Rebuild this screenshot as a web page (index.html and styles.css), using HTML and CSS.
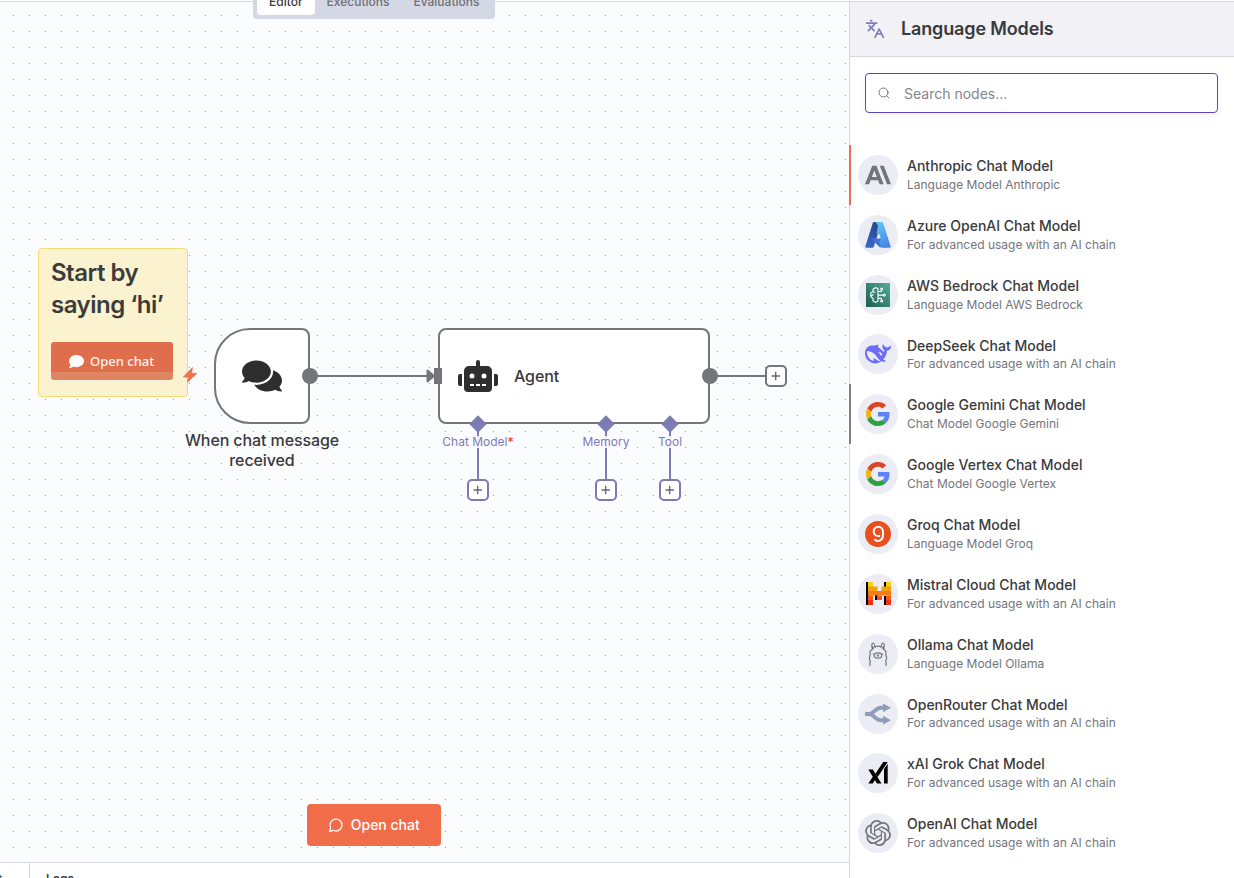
FILE: index.html
```html
<!DOCTYPE html>
<html lang="en">
<head>
<meta charset="utf-8">
<title>Workflow editor</title>
<link rel="stylesheet" href="styles.css">
</head>
<body>
<div class="topline"></div>
<div class="app">
  <main class="workspace">
    <section class="canvas">
      <nav class="tabs">
        <span class="tab active">Editor</span>
        <span class="tab">Executions</span>
        <span class="tab">Evaluations</span>
      </nav>

      <div class="sticky">
        <h2>Start by<br>saying ‘hi’</h2>
        <div class="sticky-button">
          <svg width="15" height="15" viewBox="0 0 512 512"><path fill="#fff" d="M256 32C114.600 32 0 125.100 0 240c0 49.600 21.400 95 57 130.700C44.500 421.100 2.700 466 2.200 466.500c-2.200 2.300-2.800 5.700-1.500 8.700S4.800 480 8 480c66.300 0 116-31.800 140.600-51.400 32.700 12.300 69 19.400 107.400 19.400 141.400 0 256-93.100 256-208S397.400 32 256 32z"/></svg>
          <span>Open chat</span>
        </div>
      </div>

      <svg class="wires" width="849" height="860" viewBox="0 2 849 860">
        <g stroke="#75757c" stroke-width="2"><path d="M310 376H430M710 376H765"/></g>
        <g stroke="#7d7bb3" stroke-width="2"><path d="M478 424V480M606 424V480M670 424V480"/></g>
        <path d="M427.500 370.500V381.500L434 376Z" fill="#75757c" stroke="#75757c" stroke-width="2" stroke-linejoin="round"/>
        <path d="M192.400 367.600 183.400 377H188.500L187.500 382.300 197 373.300H191.500Z" fill="#f4714e" stroke="#f4714e" stroke-width=".8" stroke-linejoin="round"/>
      </svg>

      <div class="node trigger">
        <svg width="40" height="36" viewBox="0 0 576 512"><path fill="#2e2e2e" d="M416 192c0-88.400-93.100-160-208-160S0 103.600 0 192c0 34.300 14.100 65.900 38 92-13.400 30.200-35.500 54.200-35.800 54.500-2.200 2.300-2.800 5.700-1.500 8.700S4.800 352 8 352c36.600 0 66.900-12.300 88.700-25 32.200 15.700 70.300 25 111.300 25 114.900 0 208-71.600 208-160zm122 220c23.900-26 38-57.700 38-92 0-66.900-53.500-124.200-129.300-148.100.9 6.600 1.300 13.300 1.300 20.100 0 105.900-107.700 192-240 192-10.800 0-21.300-.8-31.700-1.900C207.800 439.600 281.800 480 368 480c41 0 79.100-9.200 111.300-25 21.800 12.700 52.100 25 88.700 25 3.200 0 6.100-1.900 7.300-4.800 1.300-2.900.7-6.300-1.500-8.700-.3-.3-22.400-24.200-35.800-54.500z"/></svg>
      </div>
      <div class="node-caption">When chat message<br>received</div>

      <div class="node agent">
        <svg width="40" height="32" viewBox="0 0 640 512"><path fill="#2e2e2e" d="M32,224H64V416H32A32,32,0,0,1,0,384V256A32,32,0,0,1,32,224Zm512-48V448a64,64,0,0,1-64,64H160a64,64,0,0,1-64-64V176a80,80,0,0,1,80-80H288V32a32,32,0,0,1,64,0V96H464A80,80,0,0,1,544,176ZM264,256a40,40,0,1,0-40,40A40,40,0,0,0,264,256Zm-8,128H192v32h64Zm96,0H288v32h64ZM456,256a40,40,0,1,0-40,40A40,40,0,0,0,456,256Zm-8,128H384v32h64ZM640,256V384a32,32,0,0,1-32,32H576V224h32A32,32,0,0,1,640,256Z"/></svg>
        <span>Agent</span>
      </div>

      <svg class="wires" width="849" height="860" viewBox="0 2 849 860">
        <g fill="#75757c"><circle cx="310" cy="376" r="8"/><circle cx="710" cy="376" r="8"/><path d="M434 368h8v16h-8z"/></g>
        <path fill="#7d7bb3" d="M478 415.300l8.700 8.700-8.700 8.700-8.700-8.700zM606 415.300l8.700 8.700-8.700 8.700-8.700-8.700zM670 415.300l8.700 8.700-8.700 8.700-8.700-8.700z"/>
        <g fill="#fff" stroke-width="2">
          <rect x="766" y="366" width="20" height="20" rx="4" stroke="#75757c"/>
          <rect x="468" y="480" width="20" height="20" rx="4" stroke="#7d7bb3"/>
          <rect x="596" y="480" width="20" height="20" rx="4" stroke="#7d7bb3"/>
          <rect x="660" y="480" width="20" height="20" rx="4" stroke="#7d7bb3"/>
        </g>
        <path stroke="#66666c" stroke-width="1.300" d="M771.500 376h8.500M775.700 371.700v8.600M473.500 490h8.500M477.700 485.700v8.600M601.500 490h8.500M605.700 485.700v8.600M665.500 490h8.500M669.700 485.700v8.600"/>
      </svg>
      <span class="port chat">Chat Model<b>*</b></span>
      <span class="port memory">Memory</span>
      <span class="port tool">Tool</span>

      <div class="open-chat">
        <svg width="16" height="16" viewBox="0 0 24 24" fill="none" stroke="#fff" stroke-width="1.800" stroke-linecap="round" stroke-linejoin="round"><path d="M7.900 20A9 9 0 1 0 4 16.100L2 22Z"/></svg>
        <span>Open chat</span>
      </div>
    </section>
    <footer class="logs">
      <div class="logs-chat">Chat</div>
      <div class="logs-title">Logs</div>
    </footer>
  </main>

  <aside class="panel">
    <header class="panel-head">
      <svg width="20" height="20" viewBox="0 0 24 24" fill="none" stroke="#7d7bb8" stroke-width="2" stroke-linecap="round" stroke-linejoin="round"><path d="m5 8 6 6M4 14l6-6 2-3M2 5h12M7 2h1M22 22l-5-10-5 10M14 18h6"/></svg>
      <h1>Language Models</h1>
    </header>
    <div class="search">
      <svg width="12" height="12" viewBox="0 0 24 24" fill="none" stroke="#77777f" stroke-width="2" stroke-linecap="round"><circle cx="11" cy="11" r="9"/><path d="m22 22-4-4"/></svg>
      <span>Search nodes...</span>
    </div>
    <ul class="models">
      <li class="selected">
        <i><svg width="26" height="26" viewBox="0 0 24 24"><path fill="#75737b" d="M17.304 3.541h-3.672l6.696 16.918H24ZM6.696 3.541 0 20.459h3.744l1.370-3.553h7.005l1.369 3.553h3.744L10.536 3.541Zm-.371 10.223 2.291-5.945 2.292 5.945Z"/></svg></i>
        <div><strong>Anthropic Chat Model</strong><p>Language Model Anthropic</p></div>
      </li>
      <li>
        <i><svg width="26" height="26" viewBox="0 0 96 96"><defs><linearGradient id="az1" x1=".6" y1="0" x2=".3" y2="1"><stop offset="0" stop-color="#294586"/><stop offset="1" stop-color="#3767c8"/></linearGradient><linearGradient id="az2" x1=".3" y1="0" x2=".7" y2="1"><stop offset="0" stop-color="#5dc5f8"/><stop offset="1" stop-color="#4583e4"/></linearGradient></defs><path fill="url(#az1)" d="M33.300 0h28.500L32.300 91.600a4.500 4.500 0 0 1-4.300 3.100H5.900a4.500 4.500 0 0 1-4.300-6L29 3.100A4.500 4.500 0 0 1 33.300 0Z"/><path fill="#3f6edb" d="M71.200 61.300h-45a2.100 2.100 0 0 0-1.400 3.600l28.900 27a4.500 4.500 0 0 0 3.100 1.200h25.500Z"/><path fill="url(#az2)" d="M66.600 3.100A4.500 4.500 0 0 0 62.300 0H38.500L48 12 43 43 54 46 58 64 52 75 62 94.700H90a4.500 4.500 0 0 0 4.300-6Z"/></svg></i>
        <div><strong>Azure OpenAI Chat Model</strong><p>For advanced usage with an AI chain</p></div>
      </li>
      <li>
        <i><svg width="24" height="24" viewBox="0 0 24 24" fill="none"><defs><linearGradient id="aws" x1="0" y1="1" x2="1" y2="0"><stop stop-color="#1b5d50"/><stop offset="1" stop-color="#54ae94"/></linearGradient></defs><path fill="url(#aws)" d="M0 0h24v24H0z"/><g stroke="#fff" stroke-width="1.100"><path d="M12 5.500 9.500 4.700 7 6.200v2.300L4.800 10v3.700L7 15.200v2.600l2.700 1.600L12 18V5.500M12 8.500h3.500V7M12 12.100h5M12 15.400h3.500v1.600M7 8.500l2.200 1M4.800 13l2.800-1.600"/><circle cx="15.700" cy="6" r="1"/><circle cx="18.200" cy="12.100" r="1"/><circle cx="15.700" cy="18" r="1"/></g></svg></i>
        <div><strong>AWS Bedrock Chat Model</strong><p>Language Model AWS Bedrock</p></div>
      </li>
      <li>
        <i><svg width="26" height="26" viewBox="0 0 24 24"><path fill="#6c6cf8" d="M23.748 4.482c-.254-.124-.364.113-.512.234-.051.039-.094.09-.137.136-.372.397-.806.657-1.373.626-.829-.046-1.537.214-2.163.848-.133-.782-.575-1.248-1.247-1.548-.352-.156-.708-.311-.955-.65-.172-.241-.219-.51-.305-.774-.055-.16-.11-.323-.293-.35-.2-.031-.278.136-.356.276-.313.572-.434 1.202-.422 1.840.027 1.436.633 2.580 1.838 3.393.137.093.172.187.129.323-.082.280-.18.552-.266.833-.055.179-.137.217-.329.140a5.526 5.526 0 01-1.736-1.180c-.857-.828-1.631-1.742-2.597-2.458a11.365 11.365 0 00-.689-.471c-.985-.957.13-1.743.388-1.836.27-.098.093-.432-.779-.428-.872.004-1.670.295-2.687.684a3.055 3.055 0 01-.465.137 9.597 9.597 0 00-2.883-.102c-1.885.210-3.390 1.102-4.497 2.623C.082 8.606-.231 10.684.152 12.850c.403 2.284 1.569 4.175 3.360 5.653 1.858 1.533 3.997 2.284 6.438 2.140 1.482-.085 3.133-.284 4.994-1.860.47.234.962.327 1.780.397.63.059 1.236-.03 1.705-.128.735-.156.684-.837.419-.961-2.155-1.004-1.682-.595-2.113-.926 1.096-1.296 2.746-2.642 3.392-7.003.05-.347.007-.565 0-.845-.004-.17.035-.237.230-.256a4.173 4.173 0 001.545-.475c1.396-.763 1.960-2.015 2.093-3.517.02-.23-.004-.467-.247-.588zM11.581 18c-2.089-1.642-3.102-2.183-3.520-2.160-.392.024-.321.471-.235.763.09.288.207.486.371.739.114.167.192.416-.113.603-.673.416-1.842-.14-1.897-.167-1.361-.802-2.500-1.860-3.301-3.307-.774-1.393-1.224-2.887-1.298-4.482-.02-.386.093-.522.477-.592a4.696 4.696 0 011.529-.039c2.132.312 3.946 1.265 5.468 2.774.868.860 1.525 1.887 2.202 2.891.72 1.066 1.494 2.082 2.480 2.914.348.292.625.514.891.677-.802.090-2.140.110-3.054-.614zm1-6.440a.306.306 0 01.415-.287.302.302 0 01.2.288.306.306 0 01-.31.307.303.303 0 01-.304-.308zm3.110 1.596c-.2.081-.399.151-.59.160a1.245 1.245 0 01-.798-.254c-.274-.23-.47-.358-.552-.758a1.730 1.730 0 01.016-.588c.07-.327-.008-.537-.239-.727-.187-.156-.426-.199-.688-.199a.559.559 0 01-.254-.078c-.11-.054-.2-.19-.114-.358.028-.054.160-.186.192-.21.356-.202.767-.136 1.146.016.352.144.618.408 1.001.782.391.451.462.576.685.914.176.265.336.537.445.848.067.195-.019.354-.25.452z"/></svg></i>
        <div><strong>DeepSeek Chat Model</strong><p>For advanced usage with an AI chain</p></div>
      </li>
      <li class="hovered">
        <i><svg width="24" height="24" viewBox="0 0 48 48"><path fill="#db4424" d="M24 9.500c3.540 0 6.710 1.220 9.210 3.600l6.850-6.850C35.900 2.380 30.470 0 24 0 14.620 0 6.510 5.380 2.560 13.220l7.980 6.190C12.430 13.720 17.740 9.500 24 9.500z"/><path fill="#5f82f7" d="M46.980 24.550c0-1.570-.15-3.090-.38-4.550H24v9.020h12.940c-.58 2.960-2.260 5.480-4.780 7.180l7.730 6c4.510-4.180 7.090-10.360 7.090-17.650z"/><path fill="#f2b30d" d="M10.530 28.590c-.48-1.450-.76-2.990-.76-4.590s.27-3.140.76-4.590l-7.980-6.190C.92 16.460 0 20.120 0 24c0 3.880.92 7.540 2.560 10.780l7.970-6.190z"/><path fill="#31a045" d="M24 48c6.480 0 11.930-2.130 15.890-5.810l-7.730-6c-2.150 1.450-4.920 2.300-8.160 2.300-6.260 0-11.570-4.220-13.470-9.910l-7.980 6.190C6.510 42.620 14.620 48 24 48z"/></svg></i>
        <div><strong>Google Gemini Chat Model</strong><p>Chat Model Google Gemini</p></div>
      </li>
      <li>
        <i><svg width="24" height="24" viewBox="0 0 48 48"><path fill="#db4424" d="M24 9.500c3.540 0 6.710 1.220 9.210 3.600l6.850-6.850C35.900 2.380 30.470 0 24 0 14.620 0 6.510 5.380 2.560 13.220l7.980 6.190C12.430 13.720 17.740 9.500 24 9.500z"/><path fill="#5f82f7" d="M46.980 24.550c0-1.570-.15-3.090-.38-4.550H24v9.020h12.940c-.58 2.960-2.260 5.480-4.780 7.180l7.730 6c4.510-4.180 7.090-10.360 7.090-17.650z"/><path fill="#f2b30d" d="M10.530 28.590c-.48-1.450-.76-2.990-.76-4.590s.27-3.140.76-4.590l-7.980-6.190C.92 16.460 0 20.120 0 24c0 3.880.92 7.540 2.560 10.780l7.970-6.190z"/><path fill="#31a045" d="M24 48c6.480 0 11.930-2.130 15.890-5.810l-7.730-6c-2.150 1.450-4.920 2.300-8.160 2.300-6.260 0-11.570-4.220-13.470-9.910l-7.980 6.190C6.510 42.620 14.620 48 24 48z"/></svg></i>
        <div><strong>Google Vertex Chat Model</strong><p>Chat Model Google Vertex</p></div>
      </li>
      <li>
        <i><svg width="26" height="26" viewBox="0 0 26 26" fill="none"><circle cx="13" cy="13" r="13" fill="#e8501f"/><path stroke="#fff" stroke-width="2" d="M17.900 10.400a4.600 4.600 0 1 0-4.600 4.600h1.800M17.900 10.200v4.900a4.800 4.800 0 0 1-8.500 3"/></svg></i>
        <div><strong>Groq Chat Model</strong><p>Language Model Groq</p></div>
      </li>
      <li>
        <i><svg width="25" height="23" viewBox="0 0 25 23"><path d="M0 0h3v23H0zM18 0h3v6h-3zM9 13h3v5H9zM18 14h3v9h-3z"/><path fill="#f6cf12" d="M2 0h5v5H2zM20 0h5v5h-5z"/><path fill="#f2a00e" d="M2 4.500h9.500V9H2zM15.500 4.500H25V9h-9.500z"/><path fill="#f47c16" d="M2 9h23v4.500H2z"/><path fill="#f05a18" d="M2 13.500h5V18H2zM11 13.500h5V18h-5zM20 13.500h5V18h-5z"/><path fill="#ea3418" d="M2 18h5v5H2zM20 18h5v5h-5z"/></svg></i>
        <div><strong>Mistral Cloud Chat Model</strong><p>For advanced usage with an AI chain</p></div>
      </li>
      <li>
        <i><svg width="20" height="26" viewBox="0 0 20 26" fill="none" stroke="#77757f" stroke-width="1.200" stroke-linecap="round"><path d="M2 24.500c-.8-2 .4-3 .2-4.300-.1-1.200-1-2-.8-3.700.1-1.300 1-1.700.8-3-.6-2.300.3-4.300 2.200-5C3.500 5.500 3.500 2 4.800 2c1.500 0 2 2.500 2.200 4.200 2-1.300 4-1.300 6 0C13.200 4.500 13.700 2 15.200 2c1.300 0 1.300 3.500.4 6.500 1.900.7 2.800 2.700 2.200 5-.2 1.300.7 1.700.8 3 .2 1.700-.7 2.500-.8 3.700-.2 1.300 1 2.300.2 4.300M4.800 5.500l.5 2M15.200 5.500l-.5 2"/><ellipse cx="10" cy="14.500" rx="3.800" ry="2.700"/><path d="M9.300 14 10 14.500l.7-.5M10 14.500v1M5.200 12.800v.3M14.800 12.800v.3"/></svg></i>
        <div><strong>Ollama Chat Model</strong><p>Language Model Ollama</p></div>
      </li>
      <li>
        <i><svg width="26" height="22" viewBox="0 0 26 22"><path d="M0 11h4c5 0 6-6.200 12-6.200h4M4 11c5 0 6 6.200 12 6.200h4" fill="none" stroke="#909cb8" stroke-width="4"/><path fill="#909cb8" d="M18 .5 26 4.800 18 9.200zM18 12.800l8 4.400-8 4.300zM0 9h6v4H0z"/></svg></i>
        <div><strong>OpenRouter Chat Model</strong><p>For advanced usage with an AI chain</p></div>
      </li>
      <li>
        <i><svg width="20" height="22" viewBox="0 0 20 22"><path d="M.3 7.500h4.500L13.500 21.500H9zM.3 21.500 4.800 14.800 7 18.100 4.700 21.500zM19.700 0h-4.500L7.500 11.500l2.200 3.400zM16 7v14.500h3.700V1.700z"/></svg></i>
        <div><strong>xAI Grok Chat Model</strong><p>For advanced usage with an AI chain</p></div>
      </li>
      <li>
        <i><svg width="26" height="26" viewBox="0 0 24 24"><path fill="#77757e" d="M22.2819 9.8211a5.9847 5.9847 0 0 0-.5157-4.9108 6.0462 6.0462 0 0 0-6.5098-2.9A6.0651 6.0651 0 0 0 4.9807 4.1818a5.9847 5.9847 0 0 0-3.9977 2.9 6.0462 6.0462 0 0 0 .7427 7.0966 5.98 5.98 0 0 0 .511 4.9107 6.051 6.051 0 0 0 6.5146 2.9001A5.9847 5.9847 0 0 0 13.2599 24a6.0557 6.0557 0 0 0 5.7718-4.2058 5.9894 5.9894 0 0 0 3.9977-2.9001 6.0557 6.0557 0 0 0-.7475-7.0729zm-9.022 12.6081a4.4755 4.4755 0 0 1-2.8764-1.0408l.1419-.0804 4.7783-2.7582a.7948.7948 0 0 0 .3927-.6813v-6.7369l2.02 1.1686a.071.071 0 0 1 .038.052v5.5826a4.504 4.504 0 0 1-4.4945 4.4944zm-9.6607-4.1254a4.4708 4.4708 0 0 1-.5346-3.0137l.142.0852 4.783 2.7582a.7712.7712 0 0 0 .7806 0l5.8428-3.3685v2.3324a.0804.0804 0 0 1-.0332.0615L9.74 19.9502a4.4992 4.4992 0 0 1-6.1408-1.6464zM2.3408 7.8956a4.485 4.485 0 0 1 2.3655-1.9728V11.6a.7664.7664 0 0 0 .3879.6765l5.8144 3.3543-2.0201 1.1685a.0757.0757 0 0 1-.071 0l-4.8303-2.7865A4.504 4.504 0 0 1 2.3408 7.872zm16.5963 3.8558L13.1038 8.364 15.1192 7.2a.0757.0757 0 0 1 .071 0l4.8303 2.7913a4.4944 4.4944 0 0 1-.6765 8.1042v-5.6772a.79.79 0 0 0-.407-.667zm2.0107-3.0231l-.142-.0852-4.7735-2.7818a.7759.7759 0 0 0-.7854 0L9.409 9.2297V6.8974a.0662.0662 0 0 1 .0284-.0615l4.8303-2.7866a4.4992 4.4992 0 0 1 6.6802 4.66zM8.3065 12.863l-2.02-1.1638a.0804.0804 0 0 1-.038-.0567V6.0742a4.4992 4.4992 0 0 1 7.3757-3.4537l-.142.0805L8.704 5.459a.7948.7948 0 0 0-.3927.6813zm1.0976-2.3654l2.602-1.4998 2.6069 1.4998v2.9994l-2.5974 1.4997-2.6067-1.4997Z"/></svg></i>
        <div><strong>OpenAI Chat Model</strong><p>For advanced usage with an AI chain</p></div>
      </li>
    </ul>
  </aside>
</div>
</body>
</html>
```

FILE: styles.css
```css
* { box-sizing: border-box; }
html, body { height: 100%; }
body {
  margin: 0;
  overflow: hidden;
  background: #fff;
  color: #3a3a3c;
  font-family: Inter, "Liberation Sans", sans-serif;
}
svg { display: block; flex: none; }
h1, h2, p, ul { margin: 0; padding: 0; }

.topline { height: 2px; border-bottom: 1px solid #d7d7e2; }
.app { display: flex; height: 876px; }
.workspace { display: flex; flex-direction: column; width: 849px; height: 876px; }

.canvas {
  position: relative;
  height: 860px;
  background: #fbfcfe conic-gradient(from 270deg at 1px 1px, #9c9ca2 90deg, transparent 0) 13px 13px / 16px 16px;
}

.tabs {
  position: absolute;
  left: 253px;
  top: -17px;
  display: flex;
  width: 242px;
  height: 34px;
  padding: 4px;
  border-radius: 4px;
  background: #d4d8e4;
}
.tab {
  padding: 0 12px;
  border-radius: 4px;
  color: #717178;
  font-size: 12px;
  font-weight: 500;
  line-height: 26px;
}
.tab.active { background: #fff; color: #3a3a3e; }

.sticky {
  position: absolute;
  left: 38px;
  top: 246px;
  width: 150px;
  height: 149px;
  padding: 8px 12px;
  border: 1px solid #f3dc78;
  border-radius: 4px;
  background: #fbf2cf;
}
.sticky h2 {
  color: #3b3b3b;
  font-size: 24px;
  font-weight: 600;
  letter-spacing: -.5px;
  line-height: 32px;
  white-space: nowrap;
}
.sticky-button {
  display: flex;
  align-items: center;
  gap: 6px;
  width: 122px;
  height: 38px;
  margin-top: 21px;
  padding-left: 18px;
  border-radius: 3px;
  background: linear-gradient(#df6e4d 30px, #e08561 30px);
  box-shadow: 0 0 0 1px #fdf0dc;
  color: #fff3ea;
  font: 500 13px "Noto Sans", sans-serif;
}

.wires { position: absolute; left: 0; top: 0; }
.node {
  position: absolute;
  top: 326px;
  display: flex;
  align-items: center;
  height: 96px;
  border: 2px solid #75757c;
  background: #fff;
}
.trigger { left: 214px; width: 96px; justify-content: center; border-radius: 36px 8px 8px 36px; }
.agent {
  left: 438px;
  width: 272px;
  padding-left: 18px;
  gap: 16px;
  border-radius: 8px;
  font-size: 16px;
  font-weight: 500;
  letter-spacing: -.1px;
}
.node-caption {
  position: absolute;
  left: 162px;
  top: 428px;
  width: 200px;
  text-align: center;
  font-size: 16px;
  font-weight: 500;
  letter-spacing: -.1px;
  line-height: 20px;
}
.port {
  position: absolute;
  top: 434px;
  transform: translateX(-50%);
  background: rgba(251, 252, 254, .85);
  color: #7d7bb3;
  font-size: 12px;
  line-height: 12px;
  white-space: nowrap;
}
.port b { color: #e8402c; font-weight: 500; }
.chat { left: 478px; }
.memory { left: 606px; }
.tool { left: 670px; }

.open-chat {
  position: absolute;
  left: 307px;
  top: 802px;
  display: flex;
  align-items: center;
  justify-content: center;
  gap: 7px;
  width: 133.500px;
  height: 42px;
  border-radius: 4px;
  background: #f16c48;
  color: #fff;
  font-size: 14px;
  font-weight: 500;
}
.open-chat span { padding-bottom: 1px; }

.logs {
  display: flex;
  height: 16px;
  overflow: hidden;
  border-top: 1px solid #d7d7e6;
  background: #fff;
  font-size: 12px;
  font-weight: 600;
  line-height: 32px;
}
.logs-chat { display: flex; justify-content: flex-end; width: 30px; height: 32px; padding-right: 27px; border-right: 1px solid #d7d7e6; }
.logs-title { padding-left: 16px; }

.panel { width: 385px; border-left: 1px solid #d5d5e3; background: #fff; }
.panel-head {
  display: flex;
  align-items: center;
  gap: 16px;
  height: 55px;
  padding-left: 15px;
  border-bottom: 1px solid #d5d5e3;
  background: #f1f1f6;
}
.panel-head h1 { font-size: 18px; font-weight: 600; letter-spacing: -.14px; line-height: 24px; }
.search {
  display: flex;
  align-items: center;
  gap: 14px;
  width: 353px;
  height: 40px;
  margin: 16px 0 32px 15px;
  padding-left: 12px;
  border: 1px solid #5b45c4;
  border-radius: 4px;
  box-shadow: 0 2px 8px rgba(0, 0, 0, .05);
  color: #85858b;
  font-size: 14px;
}

.models { list-style: none; }
.models li {
  display: flex;
  align-items: center;
  gap: 9px;
  height: 59.85px;
  margin-left: -1px;
  padding-left: 7px;
  border-left: 2px solid transparent;
}
.models .selected { border-color: #f06c4a; }
.models .hovered { border-color: #808086; }
.models i {
  display: grid;
  place-items: center;
  width: 40px;
  height: 40px;
  border-radius: 50%;
  background: #ececf5;
}
.models strong { display: block; margin-top: .05px; font-size: 14px; font-weight: 500; line-height: 18px; }
.models p { margin: 1.85px 0 .1px; color: #75757c; font-size: 12px; line-height: 16px; }
```
